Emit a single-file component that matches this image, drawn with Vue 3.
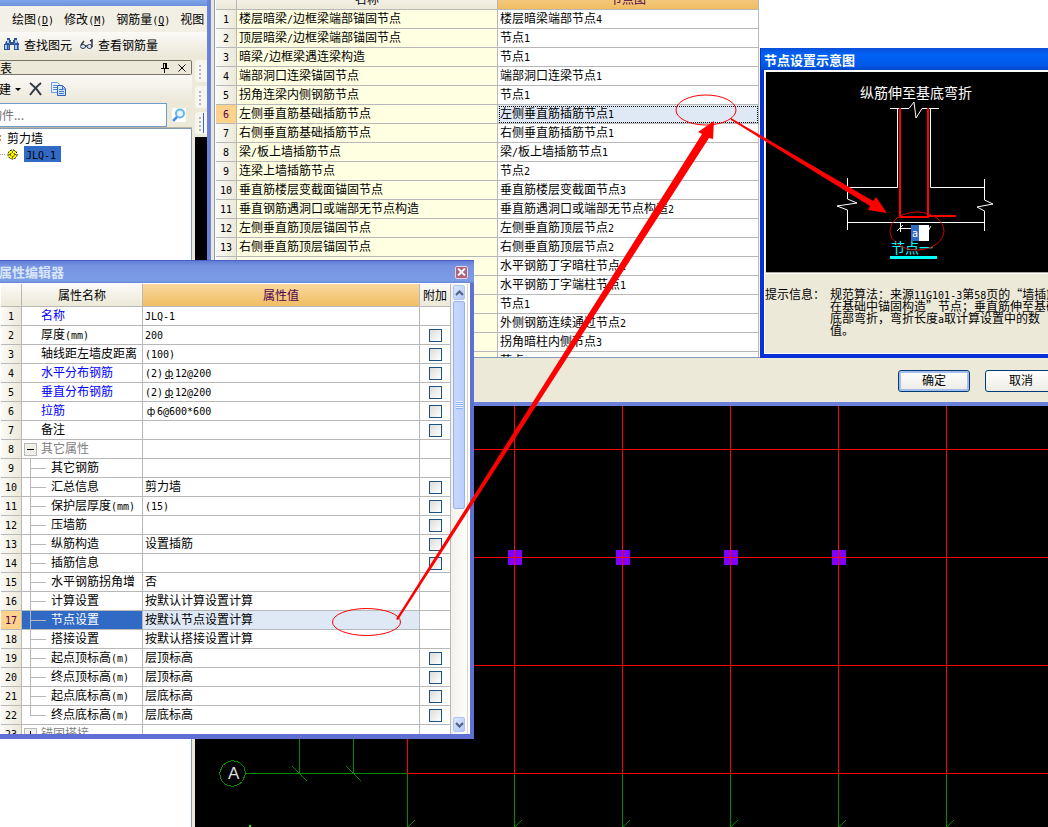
<template>
  <div class="desktop">
    <!-- ventana principal -->
    <main class="app">
      <div class="app-edge"></div>
      <nav class="menu">
        <a v-for="m in menu" :key="m.text" href="#">
          <Txt :text="m.text" /><span v-if="m.key" class="lat">(<u>{{ m.key }}</u>)</span>
        </a>
      </nav>
      <div class="toolbar">
        <button class="tool">
          <svg width="16" height="15" viewBox="0 0 16 15">
            <path d="M3 1h3v2h1v2h2V3h1V1h3v2l1 3h1v7h-5V8H6v5H0V7h1l1-3h1z" fill="#2c5496" />
            <path d="M3 3h2v3H3zM11 3h2v3h-2zM1 8h2v4H1zM11 8h2v4h-2z" fill="#a9c8f2" />
            <path d="M5 6h1v1H5zM10 6h1v1h-1zM4 8h1v4H4zM14 8h1v4h-1z" fill="#5c8bd0" />
          </svg>
          查找图元
        </button>
        <button class="tool">
          <svg width="14" height="11" viewBox="0 0 14 11">
            <g fill="#dbe6f4" stroke="#2f3b4a">
              <ellipse cx="3" cy="7.500" rx="2.500" ry="2" />
              <ellipse cx="9.500" cy="7.500" rx="2.500" ry="2" />
              <path d="M5 7h2M1 6l3-4M12 8V1l-2 1" fill="none" stroke-width="1.500" />
            </g>
          </svg>
          查看钢筋量
        </button>
      </div>

      <div class="work">
        <aside class="dock">
          <div class="dock-title">
            <span class="grow">表</span>
            <button aria-label="固定">
              <svg width="8" height="10" viewBox="0 0 8 10" shape-rendering="crispEdges">
                <path d="M2 0h4v5H2zM0 5h8v1H0zM3 6h1v4H3z" fill="#000" />
                <path d="M3 1h1v4H3z" fill="#ece9d8" />
              </svg>
            </button>
            <button aria-label="关闭">
              <svg width="8" height="8" viewBox="0 0 8 8">
                <path d="M.5.5l7 7M7.500.5l-7 7" stroke="#000" />
              </svg>
            </button>
          </div>
          <div class="dock-tools">
            <button class="new">建<i class="caret"></i></button>
            <button aria-label="删除">
              <svg width="14" height="14" viewBox="0 0 14 14">
                <path d="M1 1c4 3 8 7 11 12M12 1C8 4 4 9 1 13" stroke="#303944" stroke-width="2" fill="none" />
              </svg>
            </button>
            <button aria-label="复制">
              <svg width="16" height="14" viewBox="0 0 16 14">
                <path d="M.5.5h6l2 2v8h-8z" fill="#e8f2ff" stroke="#6b9be0" />
                <path d="M2 3.500h4M2 5.500h4M2 7.500h4" stroke="#5b86cc" />
                <path d="M6.500 3.500h5l3 3v7h-8z" fill="#d4e6ff" stroke="#2d5fb4" />
                <path d="M8 7.500h4M8 9.500h5M8 11.500h5M11.500 4v3h3" stroke="#3f73c6" fill="none" />
              </svg>
            </button>
          </div>
          <div class="search">
            <input type="text" placeholder="构件..." aria-label="搜索构件" />
            <button aria-label="搜索">
              <svg width="14" height="14" viewBox="0 0 14 14">
                <rect width="14" height="14" fill="#fff" />
                <circle cx="8" cy="5.500" r="4" fill="#e6f6ff" stroke="#62b4ee" stroke-width="2" />
                <path d="M5 9l-4 4" stroke="#4a8fe0" stroke-width="2.500" />
              </svg>
            </button>
          </div>
          <ul class="tree">
            <li class="root">剪力墙</li>
            <li class="leaf">
              <svg width="11" height="11" viewBox="0 0 11 11">
                <circle cx="5.500" cy="5.500" r="4.500" fill="#ff0" stroke="#000" stroke-dasharray="2 1" />
                <circle cx="5.500" cy="5.500" r="2" fill="#ff0" stroke="#000" stroke-dasharray="1 1" />
                <path d="M5.500 2v2M5.500 7v2M2 5.500h2M7 5.500h2" stroke="#776000" />
              </svg>
              <span class="picked"><Txt text="JLQ-1" /></span>
            </li>
          </ul>
        </aside>

        <div class="canvas-col">
          <div class="strips">
            <div v-for="n in 3" :key="n" class="strip"><i></i></div>
          </div>
          <!-- plano con ejes y columnas -->
          <svg class="plan" width="100%" height="100%" shape-rendering="crispEdges">
            <g transform="translate(-195 -137)">
              <path d="M245 773.500H407M299.500 700V773M353.500 700V773" stroke="#008a00" />
              <path d="M292 766l15 15M346 766l15 15" stroke="#008a00" />
              <g v-for="x in axes" :key="x" stroke="#008a00">
                <line :x1="x + 0.5" y1="774" :x2="x + 0.5" y2="827" />
                <line :x1="x + 1" y1="827" :x2="x + 8" y2="820" />
              </g>
              <rect v-for="x in columns" :key="x" :x="x - 6" y="550" width="14" height="15" fill="#7f00ff" />
              <line v-for="x in axes" :key="'v' + x" :x1="x + 0.5" y1="400" :x2="x + 0.5" y2="774" stroke="#f00" />
              <line v-for="y in [449, 557, 665, 773]" :key="'h' + y" x1="407" :y1="y + 0.5" x2="4000" :y2="y + 0.5" stroke="#f00" />
              <path d="M232.500 760.500l7 2 5 5 1 6-3 8-4 3-6 2-7-2-4-4-2-7 3-8 4-3z" fill="none" stroke="#008a00" />
              <text x="228" y="779" class="axis">A</text>
              <rect x="249" y="825" width="2" height="2" fill="#0f0" />
            </g>
          </svg>
        </div>
      </div>
    </main>

    <!-- ajustes de nodos -->
    <section class="nodes">
      <div class="nodes-grid">
        <table class="grid">
          <colgroup><col class="c-idx" /><col class="c-name" /><col class="c-val" /></colgroup>
          <thead>
            <tr><th></th><th>名称</th><th class="hot">节点图</th></tr>
          </thead>
          <tbody>
            <tr v-for="(r, i) in nodeRows" :key="i" :class="{ sel: i === 5 }">
              <th><Txt :text="String(i + 1)" /></th>
              <td class="cream"><Txt :text="r[0]" /></td>
              <td class="pick"><Txt :text="r[1]" /></td>
            </tr>
          </tbody>
        </table>
      </div>
      <footer class="nodes-foot">
        <button class="xp primary">确定</button>
        <button class="xp">取消</button>
      </footer>
    </section>

    <!-- esquema del nodo -->
    <section class="sketch">
      <h2>节点设置示意图</h2>
      <div class="sketch-body">
        <div class="drawing">
          <svg width="100%" height="200">
            <g transform="translate(-766 -72)" fill="none" stroke="#fff">
              <path d="M890 108.500H909L914 102L916 118L922 108.500H939" />
              <path d="M897.500 108V187.500H848M930.500 108V187.500H984" />
              <path d="M847.500 222.500H985" />
              <path d="M847.500 178V199L857 203L837 206L847.500 210V230" />
              <path d="M984.500 179V200L993 204L977 207L984.500 211V231" />
              <path d="M900 108V217H928V108M927 216H956" stroke="#f00" stroke-width="2" />
              <path d="M900.500 223V232M897 231l6-6M901 228.500H912M928 231l3-5" />
              <path d="M890 257.500H937" stroke="#0ff" stroke-width="3" />
              <text x="860" y="98" class="cad">纵筋伸至基底弯折</text>
              <text x="891" y="253" class="cad cyan">节点一</text>
            </g>
          </svg>
          <input class="len" value="a" aria-label="弯折长度" />
        </div>
        <dl class="hint">
          <dt>提示信息：</dt>
          <dd><Txt v-for="l in hint" :key="l" :text="l" class="line" /></dd>
        </dl>
      </div>
    </section>

    <!-- editor de propiedades -->
    <section class="props">
      <header>
        <h2>属性编辑器</h2>
        <button class="close" aria-label="关闭">
          <svg width="9" height="8" viewBox="0 0 9 8">
            <path d="M1 .5l7 7M8 .5l-7 7" stroke="#fff" stroke-width="2" />
          </svg>
        </button>
      </header>
      <div class="props-body">
        <table class="grid">
          <colgroup><col class="p-idx" /><col class="p-name" /><col class="p-val" /><col class="p-add" /></colgroup>
          <thead>
            <tr><th></th><th>属性名称</th><th class="hot">属性值</th><th>附加</th></tr>
          </thead>
          <tbody>
            <tr v-for="(r, i) in propRows" :key="i" :class="{ sel: i === 16 }">
              <th><Txt :text="String(i + 1)" /></th>
              <td class="pname" :class="r.kind">
                <i v-if="r.kind === 'group'" class="fold" :class="{ plus: i > 20 }"></i>
                <Txt :text="r.name" />
              </td>
              <td class="pick"><Txt :text="r.value || ''" /></td>
              <td class="add"><input v-if="r.check" type="checkbox" :aria-label="r.name" /></td>
            </tr>
          </tbody>
        </table>
        <div class="scroll">
          <button aria-label="向上">
            <svg width="9" height="6" viewBox="0 0 9 6"><path d="M1 5l3.500-3.500L8 5" /></svg>
          </button>
          <div class="thumb"><i></i></div>
          <button class="down" aria-label="向下">
            <svg width="9" height="6" viewBox="0 0 9 6"><path d="M1 1l3.500 3.500L8 1" /></svg>
          </button>
        </div>
      </div>
    </section>

    <!-- anotaciones en rojo -->
    <svg class="marks" width="100%" height="100%">
      <g fill="none" stroke="#f00">
        <ellipse cx="366.500" cy="622" rx="34" ry="13.500" />
        <ellipse cx="706" cy="110" rx="30" ry="15" />
        <ellipse cx="917" cy="231" rx="27" ry="19" stroke="#c00" />
      </g>
      <g fill="#f00">
        <path d="M396 619L702 134L698 132L714 121L713 139L709 138L398 620z" />
        <path d="M731 118L873 201L876 197L887 213L868 210L870 206L731 120z" />
      </g>
    </svg>
  </div>
</template>

<script setup>
import { h } from 'vue'

// separa los tramos latinos para que midan medio carácter chino
const Txt = ({ text }) => h('span', text.split(/([\x21-\x7e]+|[фΦ])/).filter(Boolean).map(p => {
  if (p === 'ф' || p === 'Φ') return h('span', { class: p === 'Φ' ? 'bar under' : 'bar' }, 'ф')
  return /^[\x21-\x7e]/.test(p) ? h('span', { class: 'lat' }, p) : p
}))
Txt.props = ['text']

const menu = [
  { text: '绘图', key: 'D' },
  { text: '修改', key: 'M' },
  { text: '钢筋量', key: 'Q' },
  { text: '视图' }
]

const axes = [407, 514, 622, 730, 838, 946]
const columns = axes.slice(1, 5)

const nodeRows = [
  ['楼层暗梁/边框梁端部锚固节点', '楼层暗梁端部节点4'],
  ['顶层暗梁/边框梁端部锚固节点', '节点1'],
  ['暗梁/边框梁遇连梁构造', '节点1'],
  ['端部洞口连梁锚固节点', '端部洞口连梁节点1'],
  ['拐角连梁内侧钢筋节点', '节点1'],
  ['左侧垂直筋基础插筋节点', '左侧垂直筋插筋节点1'],
  ['右侧垂直筋基础插筋节点', '右侧垂直筋插筋节点1'],
  ['梁/板上墙插筋节点', '梁/板上墙插筋节点1'],
  ['连梁上墙插筋节点', '节点2'],
  ['垂直筋楼层变截面锚固节点', '垂直筋楼层变截面节点3'],
  ['垂直钢筋遇洞口或端部无节点构造', '垂直筋遇洞口或端部无节点构造2'],
  ['左侧垂直筋顶层锚固节点', '左侧垂直筋顶层节点2'],
  ['右侧垂直筋顶层锚固节点', '右侧垂直筋顶层节点2'],
  ['', '水平钢筋丁字暗柱节点1'],
  ['', '水平钢筋丁字端柱节点1'],
  ['', '节点1'],
  ['', '外侧钢筋连续通过节点2'],
  ['', '拐角暗柱内侧节点3'],
  ['', '节点1']
]

const hint = [
  '规范算法：来源11G101-3第58页的“墙插筋',
  '在基础中锚固构造”节点；垂直筋伸至基础',
  '底部弯折，弯折长度a取计算设置中的数',
  '值。'
]

const propRows = [
  { name: '名称', value: 'JLQ-1', kind: 'blue' },
  { name: '厚度(mm)', value: '200', check: true },
  { name: '轴线距左墙皮距离', value: '(100)', check: true },
  { name: '水平分布钢筋', value: '(2)Φ12@200', kind: 'blue', check: true },
  { name: '垂直分布钢筋', value: '(2)Φ12@200', kind: 'blue', check: true },
  { name: '拉筋', value: 'ф6@600*600', kind: 'blue', check: true },
  { name: '备注', check: true },
  { name: '其它属性', kind: 'group' },
  { name: '其它钢筋', kind: 'child' },
  { name: '汇总信息', value: '剪力墙', kind: 'child', check: true },
  { name: '保护层厚度(mm)', value: '(15)', kind: 'child', check: true },
  { name: '压墙筋', kind: 'child', check: true },
  { name: '纵筋构造', value: '设置插筋', kind: 'child', check: true },
  { name: '插筋信息', kind: 'child', check: true },
  { name: '水平钢筋拐角增', value: '否', kind: 'child' },
  { name: '计算设置', value: '按默认计算设置计算', kind: 'child' },
  { name: '节点设置', value: '按默认节点设置计算', kind: 'child' },
  { name: '搭接设置', value: '按默认搭接设置计算', kind: 'child' },
  { name: '起点顶标高(m)', value: '层顶标高', kind: 'child', check: true },
  { name: '终点顶标高(m)', value: '层顶标高', kind: 'child', check: true },
  { name: '起点底标高(m)', value: '层底标高', kind: 'child', check: true },
  { name: '终点底标高(m)', value: '层底标高', kind: 'child last', check: true },
  { name: '锚固搭接', kind: 'group' }
]
</script>

<style>
body { background: #fff; }
.lat {
  font-family: "DejaVu Sans Mono", monospace;
  font-size: 10px;
  line-height: 1;
}
.bar {
  display: inline-block;
  width: 12px;
  font-size: 10px;
  line-height: 1;
  text-align: center;
  font-family: "DejaVu Sans", sans-serif;
}
.bar.under { text-decoration: underline; }
</style>

<style scoped>
* { box-sizing: border-box; }

.desktop {
  position: relative;
  height: 100vh;
  overflow: hidden;
  font-family: "Noto Sans CJK SC", sans-serif;
  font-size: 12px;
  line-height: 16px;
  color: #000;
  white-space: nowrap;
}

button {
  padding: 0;
  border: 0;
  background: none;
  font: inherit;
  color: inherit;
}
svg { display: block; }
h2 { margin: 0; font-size: 13px; font-weight: 700; }

/* ventana principal */
.app {
  display: flex;
  flex-direction: column;
  height: 100%;
  background: #ece9d8;
}
.app-edge { height: 6px; background: linear-gradient(#7da6ea, #6f90dd); }
.menu {
  display: flex;
  align-items: center;
  gap: 10px;
  height: 26px;
  padding-left: 12px;
  background: linear-gradient(90deg, #f3f1e7, #ece9d8);
}
.menu a { color: #000; text-decoration: none; }
.toolbar {
  display: flex;
  align-items: center;
  gap: 8px;
  height: 25px;
  padding-left: 4px;
  background: linear-gradient(#fbfaf7, #ebe7d8);
}
.tool { display: flex; align-items: center; gap: 4px; }
.work { display: flex; flex: 1; min-height: 0; padding-top: 3px; }

.dock {
  display: flex;
  flex-direction: column;
  flex: 0 0 192px;
}
.dock-title {
  display: flex;
  align-items: center;
  gap: 9px;
  height: 15px;
  padding-right: 5px;
  border: 1px solid #77756c;
  border-left: 0;
  border-radius: 0 2px 2px 0;
}
.grow { flex: 1; }
.dock-tools {
  display: flex;
  align-items: center;
  gap: 8px;
  height: 28px;
  background: linear-gradient(#faf9f5, #ebe7d8);
}
.new { display: flex; align-items: center; gap: 4px; margin-left: -1px; }
.caret {
  border: 3px solid transparent;
  border-top-color: #000;
  border-bottom-width: 0;
}
.search {
  display: flex;
  align-items: center;
  height: 25px;
  border-bottom: 1px solid #b9b6a4;
}
.search input {
  width: 181px;
  height: 24px;
  margin-left: -14px;
  padding: 0 0 2px 3px;
  border: 1px solid #6f9bc8;
  background: #fff;
  font: inherit;
}
.search input::placeholder { color: #707070; }
.search button { margin-left: 5px; }
.tree {
  flex: 1;
  margin: 0;
  padding: 1px 0 0;
  border: solid #7f9db9;
  border-width: 1px 1px 0 0;
  background: #fff;
  list-style: none;
}
.tree li { height: 16px; padding-left: 7px; line-height: 16px; }
.tree .root { background: repeating-linear-gradient(#d8813c 0 2px, #fff 2px 4px) 0 5px / 1px 8px no-repeat; }
.tree .leaf {
  display: flex;
  align-items: center;
  gap: 6px;
  background: repeating-linear-gradient(90deg, #a09c90 0 1px, #fff 1px 2px) 0 8px / 6px 1px no-repeat;
}
.picked { width: 37px; padding-left: 2px; background: #316ac5; }

.canvas-col {
  display: flex;
  flex-direction: column;
  flex: 1;
  min-width: 0;
  padding-left: 3px;
}
.strips {
  display: flex;
  flex-direction: column;
  gap: 4px;
  height: 77px;
}
.strip {
  flex: 0 0 22px;
  padding: 5px 0 0 4px;
  border-radius: 3px;
  background: #f7f5ef;
}
.strip i {
  display: block;
  width: 2px;
  height: 14px;
  background: repeating-linear-gradient(#b9b7ae 0 2px, transparent 2px 4px);
}
.strip:last-child { background: linear-gradient(#316ac5, #316ac5) 8px 1px / 1px 20px no-repeat, #f7f5ef; }
.plan { flex: 1; min-height: 0; background: #000; }
.axis { fill: #ddd; font: 17px "Liberation Sans", sans-serif; }

/* tablas */
.grid {
  table-layout: fixed;
  border-collapse: separate;
  border-spacing: 0;
}
.grid th, .grid td {
  height: 19px;
  padding: 0 0 2px 2px;
  border: solid #b8b8b8;
  border-width: 0 1px 1px 0;
  overflow: hidden;
  text-align: left;
  font-weight: 400;
}
.grid tbody th {
  padding: 0 0 2px;
  text-align: center;
  background: linear-gradient(90deg, #fbfaf6, #ece9d8);
}
.grid thead th {
  height: 23px;
  padding: 0 0 1px;
  text-align: center;
  background: linear-gradient(#fbfaf7, #ece9d8);
}
.grid thead .hot { color: #500050; background: linear-gradient(#f9d9a0, #f0bd62); }
.grid .sel th { color: #500050; background: #ffd28c; }
.grid .sel .pick { background: #dfe9f6; }
.grid .cream { background: #ffffe1; }

/* ajustes de nodos */
.nodes {
  position: absolute;
  top: -14px;
  left: 207px;
  right: -60px;
  border: solid #6a82dc;
  border-width: 0 4px 4px;
  background: #ece9d8;
}
.nodes-grid {
  height: 372px;
  margin-left: 3px;
  padding-left: 1px;
  border: solid #7f9db9;
  border-width: 0 0 1px 1px;
  background: #fff;
  overflow: hidden;
}
.nodes .grid { width: 543px; }
.nodes .grid thead th { height: 24px; padding: 3px 0 0; }
.c-idx { width: 21px; }
.c-name { width: 261px; }
.c-val { width: 261px; }
.nodes .sel .pick { outline: 1px dotted #000; outline-offset: -2px; }
.nodes-foot {
  display: flex;
  justify-content: flex-end;
  gap: 15px;
  height: 44px;
  padding: 12px 47px 0 0;
}
.xp {
  width: 72px;
  height: 22px;
  padding-bottom: 2px;
  border: 1px solid #003c74;
  border-radius: 3px;
  background: linear-gradient(#fff, #ecebe5);
}
.primary { box-shadow: inset 0 0 0 2px #a4bdf0; }

/* esquema */
.sketch {
  position: absolute;
  top: 48px;
  left: 760px;
  right: -12px;
  border: solid #0831d9;
  border-width: 0 4px 4px;
  background: #0831d9;
}
.sketch h2 {
  height: 22px;
  margin: 0 -3px;
  padding: 2px 0 0 3px;
  line-height: 20px;
  color: #fff;
  background: linear-gradient(#0a50d8, #0062f5 30%, #0058e8 80%, #0046c8);
}
.sketch-body { border: 1px solid #fff; background: #ece9d8; }
.drawing {
  position: relative;
  margin-left: 1px;
  border-top: 1px solid #fff;
  border-bottom: 1px solid #aca899;
  background: #000;
}
.cad { fill: #fff; stroke: none; font-size: 14px; }
.cyan { fill: #0ff; }
.len {
  position: absolute;
  left: 145px;
  top: 153px;
  width: 18px;
  height: 16px;
  padding: 0 0 0 1px;
  border: 0;
  background: linear-gradient(90deg, #316ac5 8px, #fff 8px);
  color: #fff;
  font: 10px "DejaVu Sans Mono", monospace;
}
.hint {
  display: flex;
  height: 80px;
  margin: 0;
  padding: 14px 0 0;
  border-top: 1px solid #fff;
  line-height: 12px;
}
.hint dt { flex: 0 0 65px; }
.hint dd { flex: none; margin: 0; }
.line { display: block; height: 12px; }

/* propiedades */
.props {
  position: absolute;
  top: 260px;
  left: 0;
  width: 474px;
  border: solid #5f6fd4;
  border-width: 0 4px 5px 0;
  background: #fff;
}
.props header {
  display: flex;
  align-items: center;
  justify-content: space-between;
  height: 23px;
  margin-right: -4px;
  padding-right: 6px;
  border-top: 1px solid #4c5fc4;
  background: linear-gradient(#5d7cd4, #7692e0 20%, #7a9ee6 90%, #6684d8);
  color: #d8e4f8;
}
.props h2 { margin-left: -1px; }
.close {
  display: flex;
  align-items: center;
  justify-content: center;
  width: 13px;
  height: 13px;
  border: 1px solid #e4d5e4;
  border-radius: 2px;
  background: #b0607c;
}
.props-body {
  display: flex;
  height: 451px;
  padding: 1px 0 0 1px;
  overflow: hidden;
}
.props .grid { width: 450px; }
.p-idx { width: 21px; }
.p-name { width: 121px; }
.p-val { width: 277px; }
.p-add { width: 31px; }

.grid .pname { position: relative; padding-left: 19px; }
.blue { color: #00f; }
.group { color: #808080; }
.grid .child { padding-left: 29px; }
.child::before, .child::after {
  content: "";
  position: absolute;
  left: 8px;
  background: #b8b8b8;
}
.child::before { top: 0; bottom: -1px; width: 1px; }
.child::after { top: 9px; width: 16px; height: 1px; }
.last::before { bottom: 9px; }
.fold {
  position: absolute;
  left: 2px;
  top: 3px;
  width: 13px;
  height: 13px;
  border: 1px solid #b8b8b8;
  background: linear-gradient(#000, #000) 2px 5px / 7px 1px no-repeat, #f0efe9;
}
.fold.plus {
  background: linear-gradient(#000, #000) 2px 5px / 7px 1px no-repeat, linear-gradient(#000, #000) 5px 2px / 1px 7px no-repeat, #f0efe9;
}
.sel .pname { background: #316ac5; color: #fff; }
.grid .add { padding: 0 0 0 1px; text-align: center; }
.add input {
  appearance: none;
  display: block;
  width: 13px;
  height: 13px;
  margin: 1px auto 0;
  border: 1px solid #1c5180;
  background: linear-gradient(135deg, #dcdcd7, #fff);
}

.scroll {
  display: flex;
  flex-direction: column;
  width: 17px;
  padding: 1px 2px 2px;
  border-right: 1px solid #d8d6cc;
  background: linear-gradient(90deg, #f3f1ec, #fefefb);
}
.scroll button {
  display: flex;
  align-items: center;
  justify-content: center;
  height: 15px;
  border: 1px solid #b0c4f4;
  border-radius: 2px;
  background: linear-gradient(135deg, #dce6fd, #b4c8f6);
}
.scroll path { fill: none; stroke: #4d6185; stroke-width: 2; }
.thumb {
  display: flex;
  align-items: center;
  justify-content: center;
  height: 208px;
  margin-top: 1px;
  border: 1px solid #98b4ec;
  border-radius: 2px;
  background: linear-gradient(90deg, #c8d6fb, #bad0fd);
}
.thumb i { width: 7px; height: 8px; background: repeating-linear-gradient(#eef4fe 0 1px, #8cb0f8 1px 2px); }
.scroll .down { margin-top: auto; }

.marks { position: absolute; inset: 0; pointer-events: none; }
</style>
